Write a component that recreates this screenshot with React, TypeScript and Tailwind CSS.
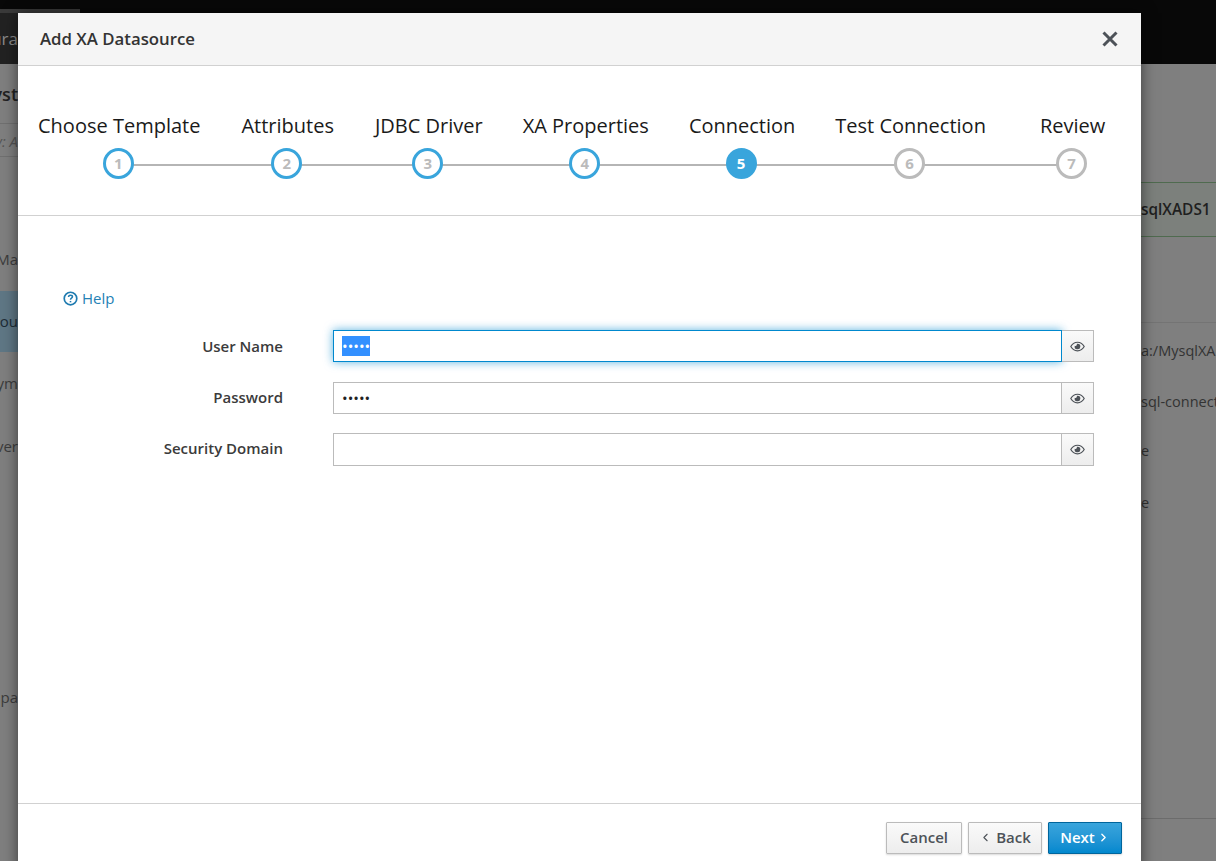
import { ChevronLeft, ChevronRight } from "lucide-react";

const steps = [
  { label: "Choose Template", state: "done", gap: "" },
  { label: "Attributes", state: "done", gap: "ml-[41px]" },
  { label: "JDBC Driver", state: "done", gap: "ml-[41px]" },
  { label: "XA Properties", state: "done", gap: "ml-[40px]" },
  { label: "Connection", state: "current", gap: "ml-[40px]" },
  { label: "Test Connection", state: "todo", gap: "ml-[40px]" },
  { label: "Review", state: "todo", gap: "ml-[54px]" },
];

const fields = [
  { label: "User Name", value: "•••••", focused: true, rowClass: "h-[32px]", labelClass: "" },
  { label: "Password", value: "•••••", focused: false, rowClass: "h-[32px] mt-[20px]", labelClass: "pb-[2px]" },
  { label: "Security Domain", value: "", focused: false, rowClass: "h-[33px] mt-[19px]", labelClass: "pb-[2px]" },
];

const EyeIcon = () => (
  <svg viewBox="0 0 576 512" className="h-[13px] w-[15px] fill-[#4d5258]">
    <path d="M288 144a110.94 110.94 0 0 0-31.24 5 55.4 55.4 0 0 1 7.24 27 56 56 0 0 1-56 56 55.4 55.4 0 0 1-27-7.24A111.71 111.71 0 1 0 288 144zm284.52 97.4C518.29 135.59 410.93 64 288 64S57.68 135.64 3.48 241.41a32.35 32.35 0 0 0 0 29.19C57.71 376.41 165.07 448 288 448s230.32-71.64 284.52-177.41a32.35 32.35 0 0 0 0-29.19zM288 400c-98.65 0-189.09-55-237.93-144C98.91 167 189.34 112 288 112s189.09 55 237.93 144C477.1 345 386.66 400 288 400z" />
  </svg>
);

const HelpIcon = () => (
  <svg viewBox="0 0 16 16" className="h-[15px] w-[15px] fill-none stroke-[#1f7bb0]">
    <circle cx="8" cy="8" r="6.7" strokeWidth="1.8" />
    <path d="M5.9 6.3c0-1.2 1-1.9 2.1-1.9s2.1.7 2.1 1.8c0 1.5-2.1 1.5-2.1 3" strokeWidth="1.6" />
    <path d="M8 10.6v1.5" strokeWidth="1.7" />
  </svg>
);

function Step({ label, state, index }: { label: string; state: string; index: number }) {
  const circle =
    state === "current"
      ? "bg-[#39a5dc] border-[#39a5dc] text-white"
      : state === "done"
        ? "bg-white border-[#39a5dc] text-[#bbbbbb]"
        : "bg-white border-[#bbbbbb] text-[#bbbbbb]";
  return (
    <li className="relative flex flex-col items-center whitespace-nowrap">
      <span className="text-[20px] leading-[27px] text-[#1a1a1a]">{label}</span>
      <span className={`mt-[9px] mr-[2px] flex h-[31px] w-[31px] items-center justify-center rounded-full border-[3px] pb-[1px] text-[15px] font-bold ${circle}`}>
        {index + 1}
      </span>
    </li>
  );
}

export default function App() {
  return (
    <div className="relative h-[861px] w-[1216px] overflow-hidden bg-[#7f7f7f] font-['Open_Sans',sans-serif] text-[15px] text-[#2e2e2e]">
      {/* page behind the modal */}
      <div className="h-[64px] bg-[#080808] pt-[9px]">
        <div className="h-[4px] w-[80px] bg-[#3a3a3a]" />
        <div className="h-[51px] w-[18px] overflow-hidden bg-[#222222] text-[17px] leading-[51px] text-[#8a8a8a]">
          <div className="flex justify-end whitespace-nowrap">ura</div>
        </div>
      </div>

      <div className="flex justify-between">
        <div className="w-[18px] whitespace-nowrap">
          <div className="flex h-[60px] items-center justify-end border-b border-[#707070] pt-[2px] text-[18px] font-semibold text-[#222222]">yst</div>
          <div className="flex h-[33px] items-center justify-end border-b border-[#707070] pt-[3px] italic text-[#555555]">y: A</div>
          <div className="flex h-[134px] items-end justify-end pb-[21px] text-[#3c3c3c]">Ma</div>
          <div className="flex h-[61px] items-center justify-end bg-[#5f7785] text-[#1d2c36]">ou</div>
          <div className="flex h-[63px] items-center justify-end text-[#3c3c3c]">ym</div>
          <div className="flex h-[63px] items-center justify-end text-[#3c3c3c]">ver</div>
          <div className="mt-[207px] flex h-[25px] items-center justify-end text-[#3c3c3c]">pa</div>
        </div>

        <div className="w-[75px] overflow-hidden text-[14.5px] whitespace-nowrap">
          <div className="mt-[118px] flex h-[55px] items-center border-y border-[#4f6b4f] bg-[#7c807c] text-[15.4px] font-semibold text-[#1f1f1f]">sqlXADS1</div>
          <div className="mt-[85px] flex h-[52px] items-center border-t border-[#747474] pt-[5px] text-[#333333]">a:/MysqlXA</div>
          <div className="flex h-[51px] items-center pt-[5px] text-[#333333]">sql-connector</div>
          <div className="flex h-[50px] items-center pt-[2px] text-[#333333]">e</div>
          <div className="flex h-[51px] items-center pt-[5px] text-[#333333]">e</div>
          <div className="mt-[292px] border-t border-[#6c6c6c]" />
        </div>
      </div>

      {/* modal */}
      <div className="absolute top-[13px] left-[18px] flex h-[860px] w-[1123px] flex-col bg-white shadow-[0_0_14px_rgba(0,0,0,0.55)]">
        <div className="flex h-[53px] shrink-0 items-center justify-between border-b border-[#d1d1d1] bg-[#f5f5f5] pr-[23px] pl-[22px]">
          <h4 className="text-[16.8px] font-semibold text-[#333333]">Add XA Datasource</h4>
          <svg viewBox="0 0 16 16" className="h-[16px] w-[16px] stroke-[#4d5258]" strokeWidth="3">
            <path d="M1.5 1.5l13 13M14.5 1.5l-13 13" />
          </svg>
        </div>

        <div className="h-[150px] shrink-0 border-b border-[#d1d1d1] pt-[46px]">
          <ol className="relative flex pr-[35px] pl-[20px]">
            <div className="absolute top-[52px] right-[68px] left-[101px] h-[2px] bg-[#b5b5b5]" />
            {steps.map((step, i) => (
              <div key={step.label} className={step.gap}>
                <Step label={step.label} state={step.state} index={i} />
              </div>
            ))}
          </ol>
        </div>

        <div className="flex-1 pt-[72px] pr-[47px] pl-[45px]">
          <a className="flex h-[20px] items-center gap-[4px] text-[15px] text-[#2481b5]">
            <HelpIcon />
            Help
          </a>
          <form className="mt-[22px]">
            {fields.map((f) => (
              <div key={f.label} className={`flex items-center ${f.rowClass}`}>
                <label className={`w-[220px] shrink-0 text-right font-semibold text-[#3b3b3b] ${f.labelClass}`}>{f.label}</label>
                <div className="ml-[50px] flex h-full flex-1">
                  <div
                    className={
                      f.focused
                        ? "flex flex-1 items-center border border-[#0088ce] px-[8px] shadow-[0_0_10px_rgba(0,136,206,0.65)]"
                        : "flex flex-1 items-center border border-[#bbbbbb] px-[8px]"
                    }
                  >
                    <span className={f.focused ? "flex h-[20px] items-center bg-[#3390ff] text-[15px] font-normal text-white" : "text-[15px] font-normal text-[#222222]"}>{f.value}</span>
                  </div>
                  <button type="button" className="flex w-[32px] items-center justify-center border border-l-0 border-[#bbbbbb] bg-gradient-to-b from-[#fafafa] to-[#ededed]">
                    <EyeIcon />
                  </button>
                </div>
              </div>
            ))}
          </form>
        </div>

        <div className="h-[70px] shrink-0 border-t border-[#d1d1d1] pt-[18px] pr-[19px]">
          <div className="flex justify-end">
            <button className="h-[32px] w-[76px] rounded-[1px] border border-[#bbbbbb] bg-gradient-to-b from-[#fafafa] to-[#ededed] pb-[1px] font-semibold text-[#4d5258] shadow-[0_1px_2px_rgba(0,0,0,0.15)]">Cancel</button>
            <button className="ml-[6px] flex h-[32px] w-[74px] items-center justify-center gap-[4px] rounded-[1px] border border-[#bbbbbb] bg-gradient-to-b from-[#fafafa] to-[#ededed] pb-[1px] font-semibold text-[#4d5258] shadow-[0_1px_2px_rgba(0,0,0,0.15)]">
              <ChevronLeft size={13} strokeWidth={2} />
              Back
            </button>
            <button className="ml-[6px] flex h-[32px] w-[74px] items-center justify-center gap-[2px] rounded-[1px] border border-[#00659c] bg-gradient-to-b from-[#39a5dc] to-[#0088ce] pb-[1px] font-semibold text-white shadow-[0_1px_2px_rgba(0,0,0,0.15)]">
              Next
              <ChevronRight size={13} strokeWidth={2.5} />
            </button>
          </div>
        </div>
      </div>
    </div>
  );
}
